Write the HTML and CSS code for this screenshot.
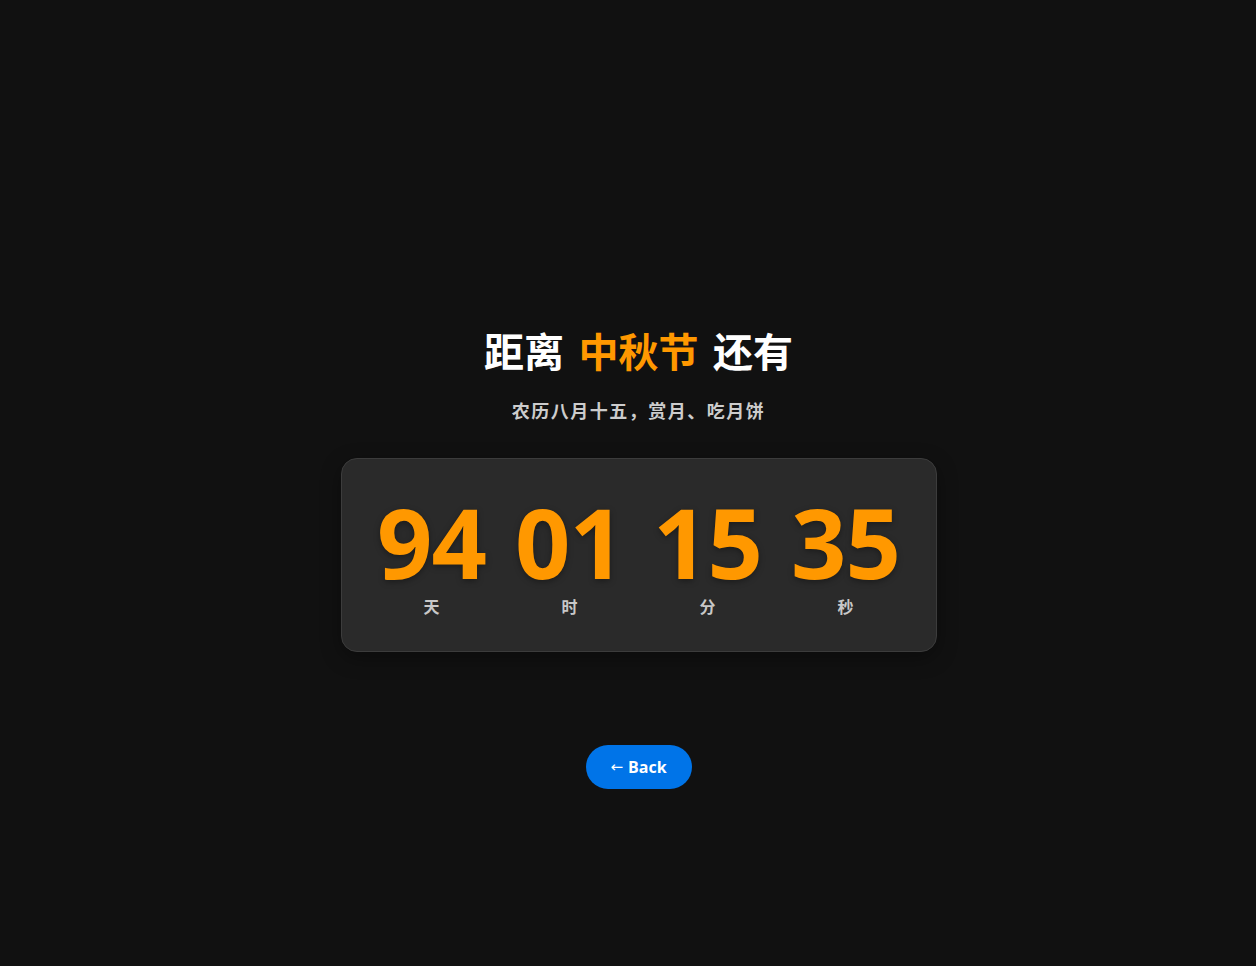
FILE: index.html
```html
<!DOCTYPE html>
<html lang="zh">
<head>
<meta charset="utf-8">
<title>中秋节倒计时</title>
<link rel="stylesheet" href="styles.css">
</head>
<body>
<main class="page">
  <h1 class="title">距离 <span class="accent">中秋节</span> 还有</h1>
  <p class="subtitle">农历八月十五，赏月、吃月饼</p>
  <section class="card">
    <div class="unit"><div class="num">94</div><div class="label">天</div></div>
    <div class="unit"><div class="num">01</div><div class="label">时</div></div>
    <div class="unit"><div class="num">15</div><div class="label">分</div></div>
    <div class="unit"><div class="num">35</div><div class="label">秒</div></div>
  </section>
  <a class="back" href="#"><span class="arrow">←</span> Back</a>
</main>
</body>
</html>
```
FILE: styles.css
```css
html, body {
  margin: 0;
  padding: 0;
  background: #111111;
}
body {
  font-family: "Open Sans", "Noto Sans CJK SC", sans-serif;
  color: #ffffff;
}
.page {
  display: flex;
  flex-direction: column;
  align-items: center;
  padding-top: 328px;
  padding-left: 21px;
}
.title {
  margin: 0;
  font-family: "Open Sans", "Noto Sans CJK SC", sans-serif;
  font-size: 40px;
  line-height: 48px;
  font-weight: 700;
  word-spacing: 4px;
  color: #ffffff;
}
.accent {
  color: #ff9800;
}
.subtitle {
  margin: 22px 0 0;
  font-family: "Noto Sans CJK SC", sans-serif;
  font-size: 18px;
  line-height: 24px;
  font-weight: 700;
  letter-spacing: 1.5px;
  color: #cccccc;
}
.card {
  margin-top: 36px;
  display: flex;
  gap: 28px;
  padding: 39px 35px 33px;
  background: #2a2a2a;
  border: 1px solid #3c3c3c;
  border-radius: 16px;
  box-shadow: 0 6px 20px rgba(0, 0, 0, 0.35);
}
.unit {
  width: 110px;
  display: flex;
  flex-direction: column;
  align-items: center;
}
.num {
  font-family: "Open Sans", sans-serif;
  font-size: 97px;
  line-height: 86px;
  font-weight: 700;
  color: #ff9800;
  letter-spacing: -1px;
  text-shadow: 0 2px 6px rgba(0, 0, 0, 0.35);
}
.label {
  margin-top: 10px;
  font-family: "Noto Sans CJK SC", sans-serif;
  font-size: 16px;
  line-height: 24px;
  font-weight: 700;
  color: #c8c8c8;
}
.back {
  margin-top: 93px;
  display: inline-flex;
  align-items: center;
  justify-content: center;
  gap: 5px;
  width: 106px;
  height: 44px;
  border-radius: 22px;
  background: #0074e8;
  color: #ffffff;
  text-decoration: none;
  font-family: "Open Sans", sans-serif;
  font-size: 16px;
  font-weight: 700;
}
.arrow {
  font-family: "DejaVu Sans", sans-serif;
  font-weight: 400;
  font-size: 15px;
}
```
